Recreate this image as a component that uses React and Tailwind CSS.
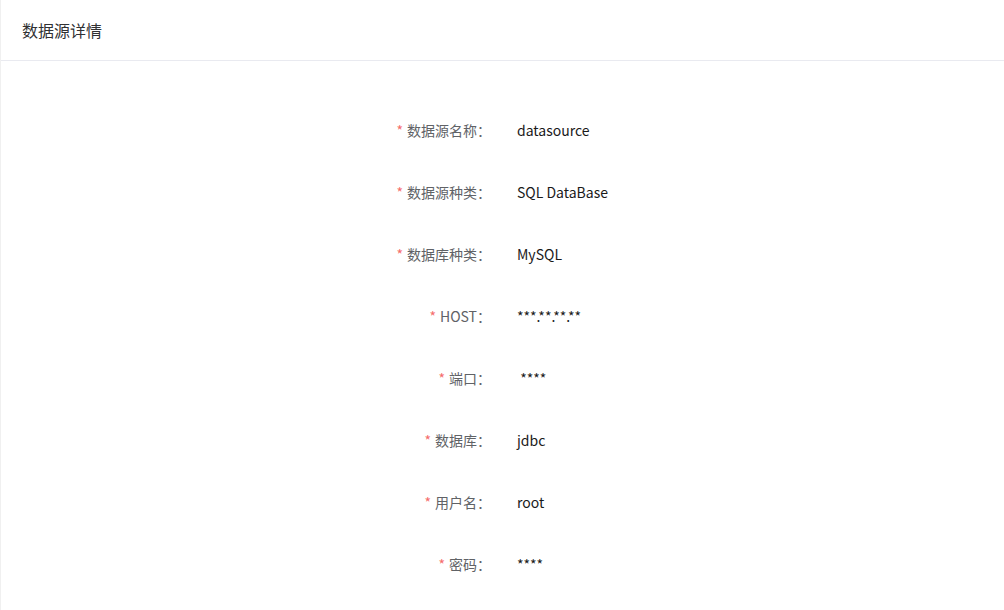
import React from "react";

const fields = [
  { label: "数据源名称", value: "datasource" },
  { label: "数据源种类", value: "SQL DataBase" },
  { label: "数据库种类", value: "MySQL" },
  { label: "HOST", value: "***.**.**.**" },
  { label: "端口", value: " ****" },
  { label: "数据库", value: "jdbc" },
  { label: "用户名", value: "root" },
  { label: "密码", value: "****" },
];

export default function App() {
  return (
    <div
      className="min-h-screen bg-white border-l border-[#f0f0f0]"
      style={{ fontFamily: '"Noto Sans CJK SC", "Noto Sans", sans-serif' }}
    >
      {/* Header */}
      <div className="h-[61px] flex items-center px-[21px] border-b border-[#e9eaf0]">
        <h1 className="text-[16px] text-[#303133] font-normal">数据源详情</h1>
      </div>

      {/* Detail form */}
      <div className="pt-[49px] pl-[369px]">
        {fields.map((f) => (
          <div key={f.label} className="flex items-center h-[40px] mb-[22px]">
            <div className="w-[121px] text-right text-[14px] text-[#606266]">
              <span className="text-[#f56c6c] mr-[4px]">*</span>
              {f.label}：
            </div>
            <div className="ml-[26px] text-[14px] text-[#1a1a1a] whitespace-pre">
              {f.value}
            </div>
          </div>
        ))}
      </div>
    </div>
  );
}
